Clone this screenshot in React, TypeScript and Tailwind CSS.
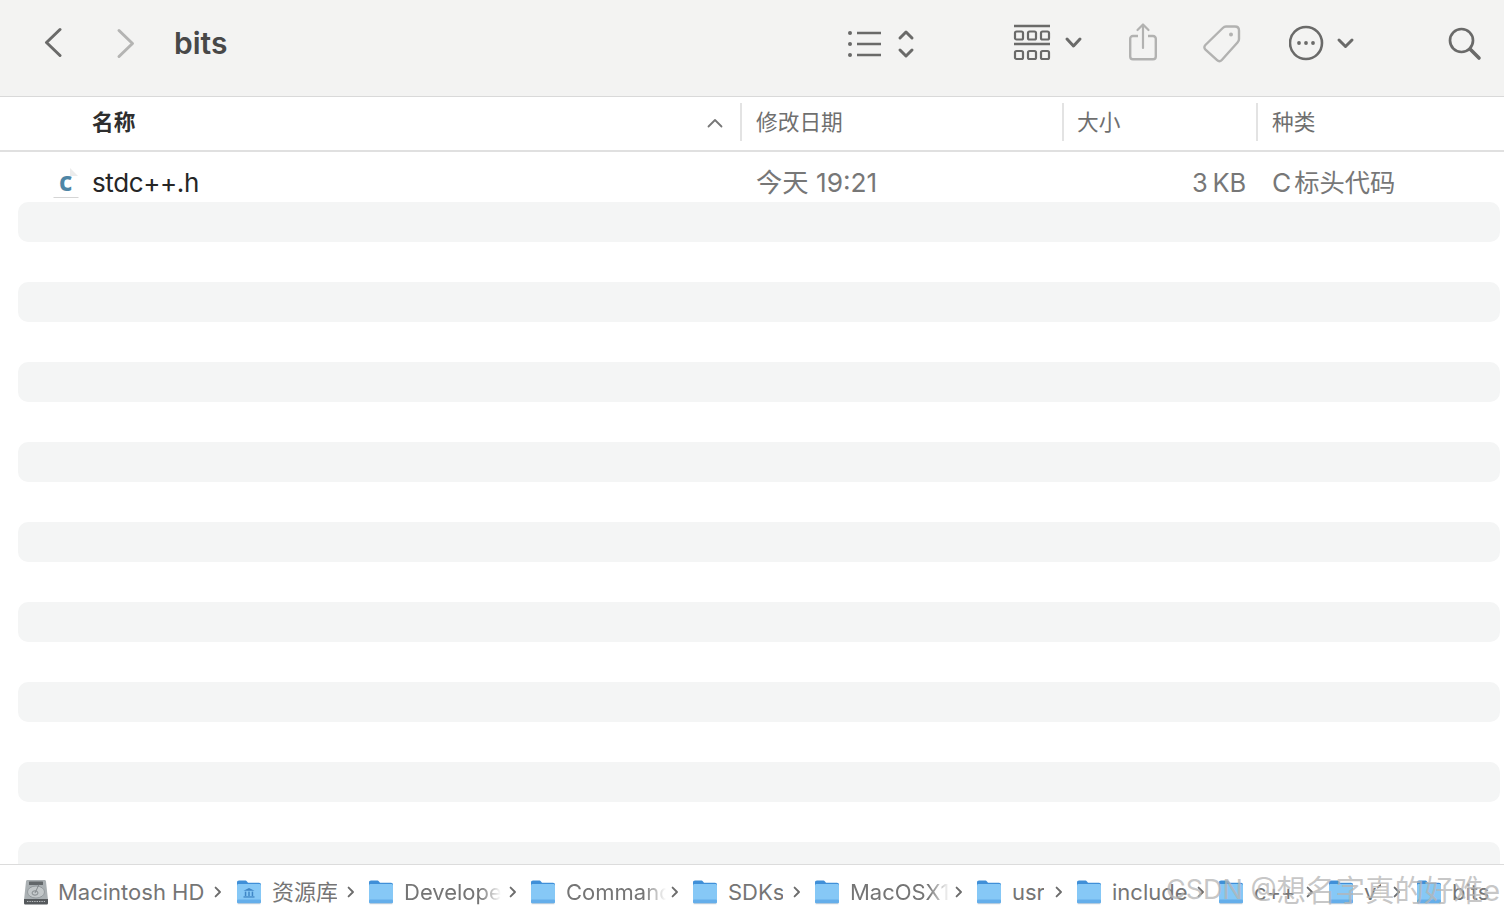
import React from "react";

const font = { fontFamily: '"Inter","Noto Sans CJK SC",sans-serif' };

function Folder({ lib = false }: { lib?: boolean }) {
  return (
    <svg width="26" height="26" viewBox="0 0 26 26" className="shrink-0">
      <path d="M1 3.5C1 2.3 1.8 1.6 3 1.6H9C10 1.6 10.6 2 11.2 2.8L12 3.8H23C24.2 3.8 25 4.5 25 5.7V10H1Z" fill="#3f8fd8" />
      <path d="M1 6.5C1 5.6 1.6 5 2.5 5H23.5C24.4 5 25 5.6 25 6.5V22.6C25 23.7 24.3 24.4 23.2 24.4H2.8C1.7 24.4 1 23.7 1 22.6Z" fill="#86c8f6" />
      <rect x="1" y="20.4" width="24" height="4" rx="1.4" fill="#65aeea" />
      <rect x="1.5" y="24.4" width="23" height="0.8" fill="#c9ced2" />
      {lib && (
        <g fill="#3f86c6">
          <path d="M13 9L18.5 11.8H7.5Z" />
          <rect x="8.8" y="12.6" width="1.5" height="4.4" />
          <rect x="12.25" y="12.6" width="1.5" height="4.4" />
          <rect x="15.7" y="12.6" width="1.5" height="4.4" />
          <rect x="7.5" y="17.3" width="11" height="1.3" />
        </g>
      )}
    </svg>
  );
}

function Drive() {
  return (
    <svg width="28" height="28" viewBox="0 0 28 28" className="shrink-0">
      <path d="M4 3.5C4 2.5 4.7 2 5.6 2H22.4C23.3 2 24 2.5 24 3.5L26 22H2Z" fill="#aab0b3" />
      <path d="M2 21H26V25C26 26 25.4 26.5 24.4 26.5H3.6C2.6 26.5 2 26 2 25Z" fill="#55595c" />
      <rect x="7" y="3.5" width="14" height="3.5" rx="0.5" fill="#62676a" />
      <ellipse cx="14" cy="14" rx="8.5" ry="6" fill="#c3c8ca" stroke="#8c9295" strokeWidth="0.8" />
      <ellipse cx="13" cy="15" rx="3" ry="2.2" fill="none" stroke="#7f8588" strokeWidth="0.9" />
      <path d="M17 6.5L13 15" stroke="#7f8588" strokeWidth="0.9" />
      <path d="M5 23.5H23" stroke="#b8bcbe" strokeWidth="1.1" strokeDasharray="1.4 1" />
    </svg>
  );
}

function Chevron({ ml }: { ml: number }) {
  return (
    <svg width="8" height="12" viewBox="0 0 8 12" className="shrink-0" style={{ marginLeft: ml }}>
      <path d="M1.6 1.6L6 6L1.6 10.4" fill="none" stroke="#6c6c6c" strokeWidth="1.9" strokeLinecap="round" strokeLinejoin="round" />
    </svg>
  );
}

type Crumb = { label: string; width: number; lib?: boolean; fade?: boolean; chev: number; after: number };

const crumbs: Crumb[] = [
  { label: "资源库", width: 65, lib: true, chev: 10, after: 13 },
  { label: "Developer", width: 97, fade: true, chev: 8, after: 13 },
  { label: "CommandLineTools", width: 100, fade: true, chev: 5, after: 13 },
  { label: "SDKs", width: 55, chev: 10, after: 13 },
  { label: "MacOSX13.sdk", width: 100, fade: true, chev: 5, after: 13 },
  { label: "usr", width: 32, chev: 11, after: 13 },
  { label: "include", width: 75, chev: 10, after: 13 },
  { label: "c++", width: 41, chev: 11, after: 14 },
  { label: "v1", width: 17, chev: 12, after: 15 },
  { label: "bits", width: 40, chev: 0, after: 0 },
];

function Breadcrumbs() {
  return (
    <div className="h-[52px] shrink-0 border-t border-[#dcdcdc] bg-white flex items-center pl-[22px] pt-[3px] text-[22px] text-[#757575] whitespace-nowrap">
      <Drive />
      <span className="ml-[8px] w-[146px] shrink-0">Macintosh HD</span>
      <Chevron ml={10} />
      <span className="w-[14px] shrink-0" />
      {crumbs.map((c, i) => (
        <React.Fragment key={i}>
          <Folder lib={c.lib} />
          <span
            className={
              c.fade
                ? "ml-[10px] shrink-0 overflow-hidden [mask-image:linear-gradient(to_right,black_78%,transparent)]"
                : "ml-[10px] shrink-0 overflow-hidden"
            }
            style={{ width: c.width }}
          >
            {c.label}
          </span>
          {i < crumbs.length - 1 && <Chevron ml={c.chev} />}
          {i < crumbs.length - 1 && <span className="shrink-0" style={{ width: c.after }} />}
        </React.Fragment>
      ))}
    </div>
  );
}

function Toolbar() {
  const s = "#6a6a69";
  return (
    <div className="h-[97px] shrink-0 bg-[#f3f3f2] border-b border-[#d9d9d9] flex items-center pb-[9px]">
      <svg width="20" height="32" viewBox="0 0 20 32" className="ml-[42px] shrink-0 -translate-y-px">
        <path d="M17 2.5L3.5 15.5L17 28.5" fill="none" stroke={s} strokeWidth="3" strokeLinecap="round" strokeLinejoin="round" transform="translate(1 0)" />
      </svg>
      <svg width="20" height="32" viewBox="0 0 20 32" className="ml-[54px] shrink-0">
        <path d="M3 2.5L16.5 15.5L3 28.5" fill="none" stroke="#b4b4b3" strokeWidth="3" strokeLinecap="round" strokeLinejoin="round" />
      </svg>
      <span className="ml-[38px] text-[30px] font-semibold text-[#484848] leading-none -translate-y-px">bits</span>
      <div className="flex-1" />
      <svg width="70" height="32" viewBox="0 0 70 32" className="shrink-0">
        <g fill={s}>
          <circle cx="3" cy="5" r="2" /><circle cx="3" cy="16" r="2" /><circle cx="3" cy="27" r="2" />
        </g>
        <path d="M10 5H34M10 16H34M10 27H34" stroke={s} strokeWidth="2.6" />
        <path d="M54 10L60 4L66 10M54 22L60 28L66 22" transform="translate(-1 0)" fill="none" stroke={s} strokeWidth="3" strokeLinecap="round" strokeLinejoin="round" />
      </svg>
      <svg width="72" height="38" viewBox="0 0 72 38" className="ml-[96px] shrink-0 -translate-y-px">
        <path d="M1 2H37M1 20H37" stroke={s} strokeWidth="2.6" />
        <g fill="none" stroke={s} strokeWidth="2.2">
          <rect x="2" y="7.5" width="8" height="8" rx="1.6" /><rect x="15" y="7.5" width="8" height="8" rx="1.6" /><rect x="28" y="7.5" width="8" height="8" rx="1.6" />
          <rect x="2" y="27" width="8" height="8" rx="1.6" /><rect x="15" y="27" width="8" height="8" rx="1.6" /><rect x="28" y="27" width="8" height="8" rx="1.6" />
        </g>
        <path d="M54 15L60.5 22L67 15" fill="none" stroke={s} strokeWidth="3" strokeLinecap="round" strokeLinejoin="round" />
      </svg>
      <svg width="32" height="40" viewBox="0 0 32 40" className="ml-[43px] shrink-0 -translate-y-[2px]">
        <path d="M10 14H5C3.3 14 2.2 15.1 2.2 16.8V34.5C2.2 36.2 3.3 37.3 5 37.3H25C26.7 37.3 27.8 36.2 27.8 34.5V16.8C27.8 15.1 26.7 14 25 14H20" fill="none" stroke="#b2b2b1" strokeWidth="2.4" />
        <path d="M15 26V2.5M9.5 8L15 2.5L20.5 8" fill="none" stroke="#b2b2b1" strokeWidth="2.2" strokeLinecap="round" strokeLinejoin="round" />
      </svg>
      <svg width="40" height="40" viewBox="0 0 40 40" className="ml-[44px] shrink-0 -translate-x-[2px]">
        <path d="M24 2.5H33C35.5 2.5 37 4 37 6.5V15C37 16.3 36.6 17.3 35.7 18.2L19.8 36C18.3 37.6 16.6 37.6 15.1 36.2L3.5 25.6C2 24.2 2 22.5 3.4 21L20.8 4C21.8 3 22.8 2.5 24 2.5Z" fill="none" stroke="#b2b2b1" strokeWidth="2.4" />
        <circle cx="29" cy="10.5" r="2" fill="#b2b2b1" />
      </svg>
      <svg width="68" height="36" viewBox="0 0 68 36" className="ml-[45px] shrink-0 -translate-y-px">
        <circle cx="17" cy="18" r="16" fill="none" stroke={s} strokeWidth="2.6" />
        <circle cx="10" cy="18" r="1.9" fill={s} /><circle cx="17" cy="18" r="1.9" fill={s} /><circle cx="24" cy="18" r="1.9" fill={s} />
        <path d="M50 15L56.5 21.5L63 15" fill="none" stroke={s} strokeWidth="3" strokeLinecap="round" strokeLinejoin="round" />
      </svg>
      <svg width="34" height="34" viewBox="0 0 34 34" className="ml-[92px] mr-[21px] shrink-0 -translate-x-px">
        <circle cx="13.5" cy="13.5" r="11.5" fill="none" stroke={s} strokeWidth="2.7" />
        <path d="M22 22L31 31" stroke={s} strokeWidth="3.6" strokeLinecap="round" />
      </svg>
    </div>
  );
}

function Header() {
  const Sep = () => <div className="w-[2px] h-[38px] bg-[#e3e3e3] shrink-0" />;
  return (
    <div className="h-[55px] shrink-0 bg-white border-b-2 border-[#e0e0e0] flex items-center text-[21.7px] text-[#6f6f6f] whitespace-nowrap pb-[3px]">
      <div className="w-[740px] shrink-0 flex items-center pl-[92px] pr-[17px]">
        <span className="font-semibold text-[#2f2f2f] flex-1">名称</span>
        <svg width="16" height="10" viewBox="0 0 16 10" className="translate-y-px">
          <path d="M1.5 8.5L8 2L14.5 8.5" fill="none" stroke="#777" strokeWidth="1.8" strokeLinecap="round" strokeLinejoin="round" />
        </svg>
      </div>
      <Sep />
      <div className="w-[320px] shrink-0 pl-[14px]">修改日期</div>
      <Sep />
      <div className="w-[192px] shrink-0 pl-[13px]">大小</div>
      <Sep />
      <div className="pl-[14px]">种类</div>
    </div>
  );
}

function FileRow() {
  return (
    <div className="h-[50px] shrink-0 flex items-center text-[26.3px] whitespace-nowrap pt-[12px]">
      <div className="w-[92px] shrink-0 flex justify-end pr-[13px]">
        <svg width="26" height="32" viewBox="0 0 26 32">
          <path d="M1 1H17L25 9V30.5H1Z" fill="#ffffff" />
          <path d="M17 1L25 9H17Z" fill="#ececec" />
          <path d="M0.5 30.5H25.5" stroke="#d5d5d5" strokeWidth="1" />
        </svg>
      </div>
      <span className="w-[664px] shrink-0 text-[#262626] text-[26px] tracking-[-0.38px] -translate-y-px">stdc++.h</span>
      <span className="w-[436px] shrink-0 text-[#777777]">今天 19:21</span>
      <span className="w-[54px] shrink-0 text-right text-[#777777] text-[25.5px]">3{"\u2009"}KB</span>
      <span className="ml-[26px] text-[#777777]">C</span>
      <span className="ml-[3px] text-[25.3px] text-[#777777]">标头代码</span>
    </div>
  );
}

export default function App() {
  return (
    <div className="relative w-[1504px] h-[916px] overflow-hidden bg-white flex flex-col" style={font}>
      <Toolbar />
      <Header />
      <div className="flex-1 overflow-hidden flex flex-col relative">
        <FileRow />
        <div className="flex flex-col gap-[40px] pl-[18px] pr-[4px]">
          {Array.from({ length: 9 }).map((_, i) => (
            <div key={i} className="h-[40px] shrink-0 rounded-[10px] bg-[#f4f5f5]" />
          ))}
        </div>
        <span className="absolute left-[59px] top-[16px] text-[26px] font-bold text-[#4f86a6] leading-none" style={{ fontFamily: '"Open Sans",sans-serif' }}>c</span>
      </div>
      <Breadcrumbs />
      <div className="absolute left-[1166px] top-[870px] leading-[40px] text-[#b5b5b5]/75 whitespace-nowrap flex items-center">
        <span className="text-[27px]">CSDN @</span>
        <span className="text-[29.5px]">想名字真的好难e</span>
      </div>
    </div>
  );
}
